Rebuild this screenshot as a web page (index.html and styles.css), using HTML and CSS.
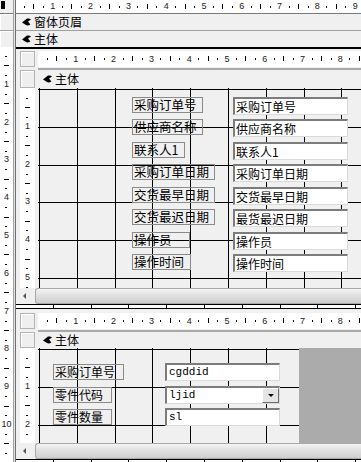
FILE: index.html
```html
<!DOCTYPE html>
<html lang="zh-CN">

<head>
	<meta charset="UTF-8">
	<title>采购订单 - 窗体设计</title>
	<meta name="viewport" content="width=device-width">
	<link rel="stylesheet" href="styles.css">
</head>

<body>
	<div class="designer">
		<!-- top ruler row -->
		<div class="corner"><span class="formSel"></span></div>
		<div class="sep"></div>
		<div class="hruler outerRuler">
			<div class="nums">
				<span>1</span><span>2</span><span>3</span><span>4</span><span>5</span><span>6</span><span>7</span><span>8</span><span>9</span>
			</div>
		</div>

		<!-- section bars -->
		<div class="selBox"></div>
		<div class="sep"></div>
		<div class="secBar">
			<svg class="secIcon" viewBox="0 0 9 8"><path d="M0 4.5 L5 0.6 Q7.6 0 9 1.4 L6 3.6 L8.4 6.4 Q6 8 4 7 Z" /></svg>
			窗体页眉
		</div>

		<div class="selBox last"></div>
		<div class="sep"></div>
		<div class="secBar last">
			<svg class="secIcon" viewBox="0 0 9 8"><path d="M0 4.5 L5 0.6 Q7.6 0 9 1.4 L6 3.6 L8.4 6.4 Q6 8 4 7 Z" /></svg>
			主体
		</div>

		<!-- detail section -->
		<div class="vruler outerV">
			<div class="nums">
				<span>1</span><span>2</span><span>3</span><span>4</span><span>5</span><span>6</span><span>7</span><span>8</span><span>9</span><span>10</span>
			</div>
		</div>
		<div class="sep"></div>
		<div class="detail">

			<div class="subform subA">
				<div class="sfRow">
					<div class="box"></div>
					<div class="hruler innerRuler">
						<div class="nums">
							<span>1</span><span>2</span><span>3</span><span>4</span><span>5</span><span>6</span><span>7</span><span>8</span>
						</div>
					</div>
				</div>
				<div class="sfRow sfBarRow">
					<div class="box"></div>
					<div class="secBar inner">
						<svg class="secIcon" viewBox="0 0 9 8"><path d="M0 4.5 L5 0.6 Q7.6 0 9 1.4 L6 3.6 L8.4 6.4 Q6 8 4 7 Z" /></svg>
						主体
					</div>
				</div>
				<div class="sfRow sfBody">
					<div class="vruler innerV">
						<div class="nums">
							<span>1</span><span>2</span><span>3</span><span>4</span><span>5</span>
						</div>
					</div>
					<div class="canvas">
						<div class="fields">
							<div class="field"><span class="lbl w71">采购订单号</span><span class="txt">采购订单号</span></div>
							<div class="field"><span class="lbl w71">供应商名称</span><span class="txt">供应商名称</span></div>
							<div class="field"><span class="lbl w53">联系人1</span><span class="txt">联系人1</span></div>
							<div class="field"><span class="lbl w83">采购订单日期</span><span class="txt">采购订单日期</span></div>
							<div class="field"><span class="lbl w83">交货最早日期</span><span class="txt">交货最早日期</span></div>
							<div class="field"><span class="lbl w83">交货最迟日期</span><span class="txt">最货最迟日期</span></div>
							<div class="field"><span class="lbl w58">操作员</span><span class="txt">操作员</span></div>
							<div class="field"><span class="lbl w59">操作时间</span><span class="txt">操作时间</span></div>
						</div>
					</div>
				</div>
				<div class="sfRow scrollRow">
					<div class="scrBtn"><span class="arrowL"></span></div>
					<div class="thumb"></div>
				</div>
			</div>

			<div class="strip"></div>

			<div class="subform subB">
				<div class="sfRow">
					<div class="box"></div>
					<div class="hruler innerRuler">
						<div class="nums">
							<span>1</span><span>2</span><span>3</span><span>4</span><span>5</span><span>6</span><span>7</span><span>8</span>
						</div>
					</div>
				</div>
				<div class="sfRow sfBarRow">
					<div class="box"></div>
					<div class="secBar inner">
						<svg class="secIcon" viewBox="0 0 9 8"><path d="M0 4.5 L5 0.6 Q7.6 0 9 1.4 L6 3.6 L8.4 6.4 Q6 8 4 7 Z" /></svg>
						主体
					</div>
				</div>
				<div class="sfRow sfBody">
					<div class="vruler innerV">
						<div class="nums">
							<span>1</span><span>2</span>
						</div>
					</div>
					<div class="canvas">
						<div class="formArea">
							<div class="fields">
								<div class="field"><span class="lbl w71">采购订单号</span><span class="txt mono">cgddid</span></div>
								<div class="field"><span class="lbl w59">零件代码</span><span class="txt mono combo">ljid<span class="dropBtn"></span></span></div>
								<div class="field"><span class="lbl w59">零件数量</span><span class="txt mono">sl</span></div>
							</div>
						</div>
						<div class="void"></div>
					</div>
				</div>
				<div class="sfRow scrollRow">
					<div class="scrBtn"><span class="arrowL"></span></div>
					<div class="thumb"></div>
				</div>
			</div>

			<div class="strip"></div>
		</div>
	</div>
</body>

</html>
```

FILE: styles.css
```css
* {
	box-sizing: border-box;
}

body {
	margin: 0;
	background: #f0f0f0;
	font-family: "Noto Sans CJK SC", sans-serif;
	color: #000;
}

.designer {
	width: 361px;
	height: 462px;
	overflow: hidden;
	display: grid;
	grid-template-columns: 13px 3px 345px;
	grid-template-rows: 14px 17px 16px 415px;
}

/* left column / separators */
.corner {
	background: #f0f0f0;
	border-bottom: 1px solid #7a7a7a;
	padding: 1px 0 0 1px;
}

.formSel {
	display: block;
	width: 4px;
	height: 8px;
	background: #000;
}

.sep {
	background: #e4e4e4;
	border-left: 1px solid #a0a0a0;
	border-right: 1px solid #707070;
}

.selBox {
	background: #f0f0f0;
	border-bottom: 1px solid #a0a0a0;
	box-shadow: inset 1px 1px #fff;
}

.selBox.last {
	border-bottom: 0;
}

/* section bars */
.secBar {
	display: flex;
	align-items: center;
	gap: 3px;
	padding-left: 6px;
	background: #f0f0f0;
	border-bottom: 1px solid #a0a0a0;
	font-size: 12px;
	line-height: 16px;
	white-space: nowrap;
}

.secBar.last {
	border-bottom: 0;
}

.secIcon {
	width: 9px;
	height: 8px;
	fill: #000;
	flex: none;
}

.secBar.inner {
	flex: 1;
	padding-left: 5px;
	border-bottom: 0;
	border-top: 2px solid #a8a8a8;
}

/* rulers */
.hruler {
	background-color: #fff;
	background-image:
		repeating-linear-gradient(90deg, transparent 0 9px, #000 9px 10px, transparent 10px 18.9px),
		repeating-linear-gradient(90deg, transparent 0 18.4px, #000 18.4px 19.4px, transparent 19.4px 37.8px);
	background-size: 100% 2px, 100% 5px;
	background-repeat: no-repeat;
	overflow: hidden;
}

.outerRuler {
	border-bottom: 1px solid #7a7a7a;
	background-position: -1px 6px, -1px 4px;
}

.innerRuler {
	flex: 1;
	height: 16px;
	background-position: 0 7px, 0 5px;
}

.nums {
	display: flex;
	font-family: "Liberation Sans", sans-serif;
	font-size: 9px;
	color: #222;
}

.nums span {
	flex: 0 0 37.8px;
	text-align: center;
}

.hruler .nums {
	padding-left: 18.9px;
}

.outerRuler .nums {
	line-height: 13px;
	margin-left: -1px;
}

.innerRuler .nums {
	line-height: 16px;
}

.vruler {
	background-color: #fff;
	background-image:
		repeating-linear-gradient(180deg, transparent 0 9px, #000 9px 10px, transparent 10px 18.9px),
		repeating-linear-gradient(180deg, transparent 0 18.4px, #000 18.4px 19.4px, transparent 19.4px 37.8px);
	background-size: 2px 100%, 5px 100%;
	background-repeat: no-repeat;
	overflow: hidden;
}

.vruler .nums {
	flex-direction: column;
	padding-top: 18.9px;
}

.vruler .nums span {
	line-height: 37.8px;
}

.outerV {
	background-position: 5px 0, 4px 0;
}

.innerV {
	flex: 0 0 15px;
	background-position: 6px 1px, 5px 1px;
}

.innerV .nums {
	padding-top: 19.9px;
}

/* detail & subforms */
.detail {
	display: flex;
	flex-direction: column;
	overflow: hidden;
}

.subform {
	background: #f0f0f0;
	padding-left: 4px;
	border-bottom: 1px solid #000;
	display: flex;
	flex-direction: column;
}

.subA {
	border-top: 2px solid #000;
	padding-top: 2px;
}

.subB {
	border-top: 1px solid #000;
	padding-top: 4px;
}

.sfRow {
	display: flex;
	gap: 3px;
}

.box {
	flex: 0 0 15px;
	background: #efefef;
	border: 1px solid #b4b4b4;
	box-shadow: inset 1px 1px #fff;
}

.sfBarRow {
	margin-top: 1px;
}

.subA .sfBarRow {
	height: 20px;
}

.subB .sfBarRow {
	height: 18px;
}

.sfBarRow .box {
	margin-top: 2px;
}

.subA .sfBody {
	height: 200px;
}

.subB .sfBody {
	height: 95px;
}

.canvas {
	flex: 1;
	display: flex;
	background-color: #f0f0f0;
	background-image:
		repeating-linear-gradient(90deg, #000 0 1px, transparent 1px 37.8px),
		repeating-linear-gradient(180deg, #000 0 1px, transparent 1px 37.8px);
	background-position: 1px 0, 0 1px;
	overflow: hidden;
}

.formArea {
	flex: 0 0 261px;
}

.void {
	flex: 1;
	background: #ababab;
}

.fields {
	display: flex;
	flex-direction: column;
	gap: 4.43px;
	padding-top: 9px;
}

.field {
	display: grid;
	grid-template-columns: 195px 115px;
	height: 18px;
}

.lbl {
	margin-left: 94px;
	height: 16px;
	border: 1px solid #8a8a8a;
	padding-left: 1px;
	font-size: 12.5px;
	line-height: 14px;
	white-space: nowrap;
}

.w71 { width: 71px; }
.w53 { width: 53px; }
.w83 { width: 83px; }
.w58 { width: 58px; }
.w59 { width: 59px; }

.txt {
	height: 18px;
	background: #fff;
	border-style: solid;
	border-width: 2px 1px 1px 2px;
	border-color: #7c7c7c #dadada #dadada #7c7c7c;
	padding-left: 1px;
	font-size: 12px;
	line-height: 15px;
	white-space: nowrap;
}

.subB .fields {
	padding-top: 15px;
	gap: 4.5px;
}

.subB .field {
	grid-template-columns: 127px 115px;
}

.subB .lbl {
	margin-left: 15px;
	margin-top: 1px;
	font-size: 12px;
}

.mono {
	font-family: "Liberation Mono", monospace;
	font-size: 11px;
	padding-left: 2px;
}

.combo {
	display: flex;
	justify-content: space-between;
}

.dropBtn {
	width: 17px;
	height: 15px;
	background: #e4e4e4;
	border: 1px solid;
	border-color: #fff #6e6e6e #6e6e6e #fff;
	display: flex;
	align-items: center;
	justify-content: center;
}

.dropBtn::after {
	content: "";
	border-left: 3px solid transparent;
	border-right: 3px solid transparent;
	border-top: 3px solid #000;
}

/* scrollbars */
.scrollRow {
	height: 16px;
	gap: 0;
}

.scrBtn {
	flex: 0 0 15px;
	display: flex;
	align-items: center;
	padding-left: 3px;
	background: #f0f0f0;
}

.arrowL {
	border-top: 3px solid transparent;
	border-bottom: 3px solid transparent;
	border-right: 3px solid #555;
}

.thumb {
	flex: 1;
	border: 1px solid #a8a8a8;
	border-right: 0;
	border-radius: 3px 0 0 3px;
	background: linear-gradient(#f4f4f4, #e0e0e0 45%, #cfcfcf);
}

.strip {
	flex: 0 0 3px;
	background-color: #fff;
	background-image: repeating-linear-gradient(90deg, transparent 0 36.8px, #000 36.8px 37.8px);
}
```
